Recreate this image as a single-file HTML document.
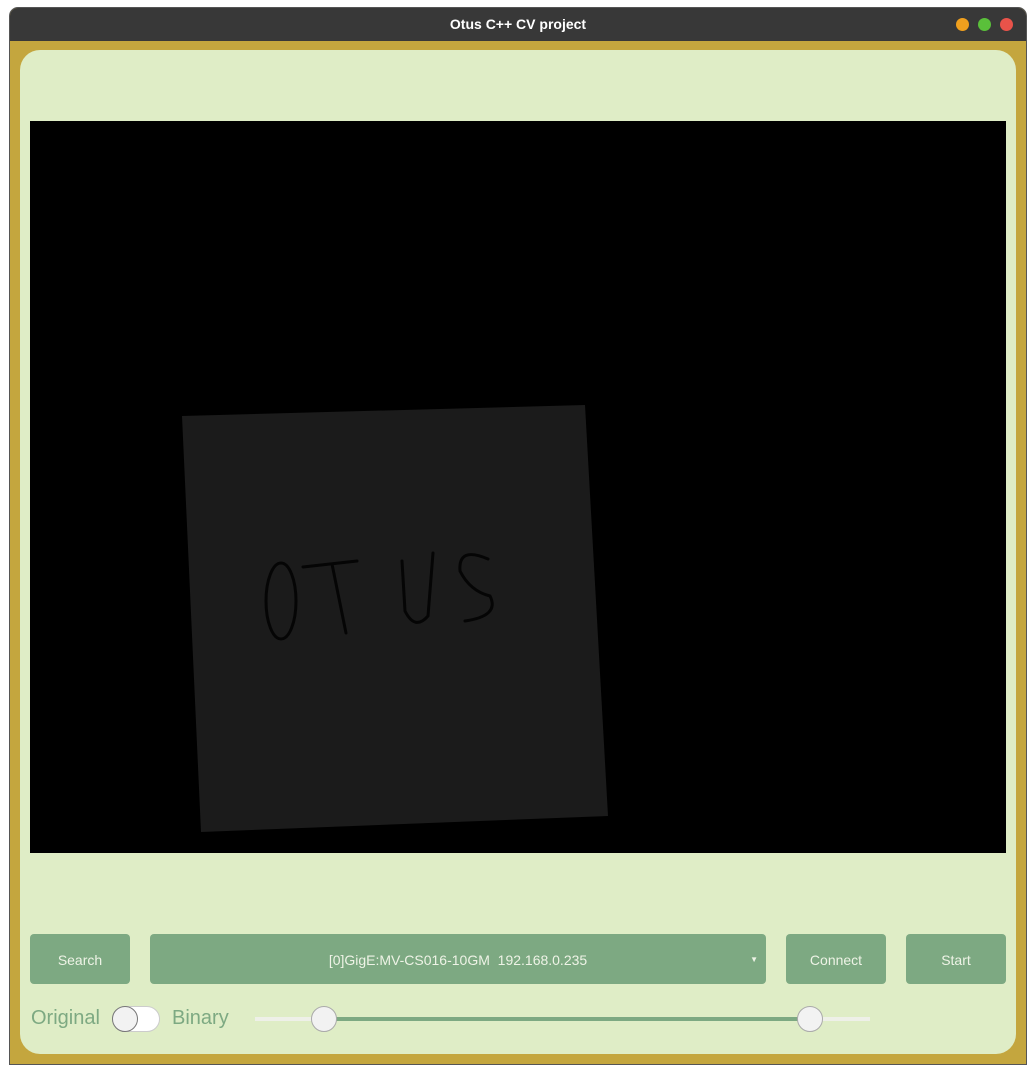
<!DOCTYPE html><html><head><style>
body{margin:0;width:1036px;height:1074px;background:#fff;position:relative;font-family:"Liberation Sans",sans-serif;overflow:hidden}
.win{position:absolute;left:9px;top:7px;width:1018px;height:1058px;background:#c4a63e;border:1px solid #555;border-radius:9px 9px 0 0;box-sizing:border-box;overflow:hidden}
.tb{position:absolute;left:0;top:0;right:0;height:33px;background:#383838;color:#fff;font-weight:bold;font-size:14px;text-align:center;line-height:33px}
.dot{position:absolute;top:10px;width:13px;height:13px;border-radius:50%}
.panel{position:absolute;left:20px;top:50px;width:996px;height:1004px;background:#dfedc6;border-radius:20px}
.vid{position:absolute;left:30px;top:121px;width:976px;height:732px;background:#000}
.btn{position:absolute;top:934px;height:50px;background:#7da982;border-radius:4px;color:#eef3e6;font-size:14px;text-align:center;line-height:52px}
.lbl{position:absolute;top:1007px;font-size:20px;color:#7da982}
.h{position:absolute;top:1006px;width:26px;height:26px;border-radius:50%;background:#f2f2f2;border:1px solid #aaa;box-sizing:border-box}
</style></head><body>
<div class="win"><div class="tb">Otus C++ CV project
<div class="dot" style="left:946px;background:#f0a01e"></div><div class="dot" style="left:968px;background:#5ac03a"></div><div class="dot" style="left:990px;background:#e9534a"></div></div></div>
<div class="panel"></div>
<div class="vid"><svg width="976" height="732"><polygon points="152,295 555,284 578,695 171,711" fill="#1b1b1b"/>
<g fill="none" stroke="#050505" stroke-width="3" stroke-linecap="round"><ellipse cx="251" cy="480" rx="15" ry="38"/><path d="M273 446 L327 440 M302 443 L316 512"/><path d="M372 440 L375 490 Q385 510 398 495 L403 432"/><path d="M458 438 Q428 425 430 450 Q440 470 460 475 Q470 495 435 500"/></g></svg></div>
<div class="btn" style="left:30px;width:100px">Search</div>
<div class="btn" style="left:150px;width:616px">[0]GigE:MV-CS016-10GM&nbsp;&nbsp;192.168.0.235<span style="position:absolute;right:8px;font-size:8px">▼</span></div>
<div class="btn" style="left:786px;width:100px">Connect</div>
<div class="btn" style="left:906px;width:100px">Start</div>
<div class="lbl" style="left:31px">Original</div>
<div style="position:absolute;left:112px;top:1006px;width:48px;height:26px;border-radius:13px;background:#fff;border:1px solid #ccc;box-sizing:border-box"></div>
<div class="h" style="left:112px;border-color:#777"></div>
<div class="lbl" style="left:172px">Binary</div>
<div style="position:absolute;left:255px;top:1017px;width:615px;height:4px;background:#eef0e8"></div>
<div style="position:absolute;left:324px;top:1017px;width:486px;height:4px;background:#7da982"></div>
<div class="h" style="left:311px"></div><div class="h" style="left:797px"></div>
</body></html>
